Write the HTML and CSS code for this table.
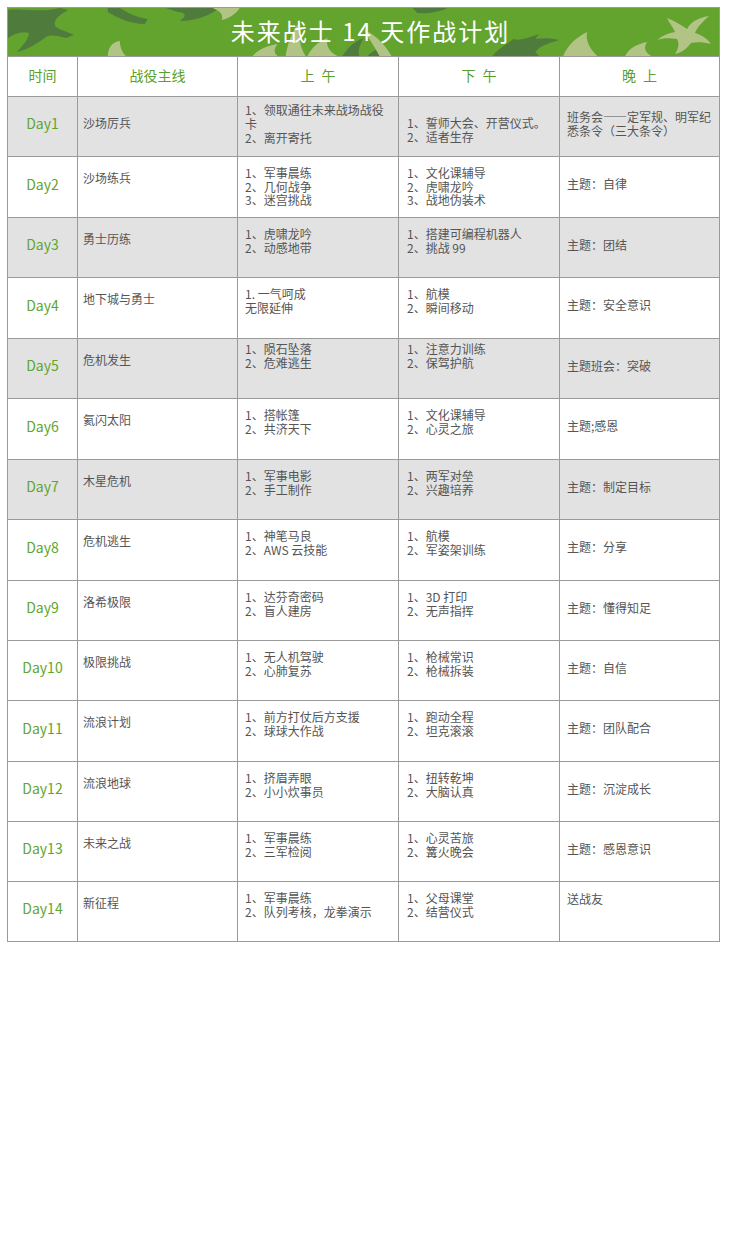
FILE: index.html
```html
<!DOCTYPE html>
<html lang="zh-CN">
<head>
<meta charset="utf-8">
<title>未来战士 14 天作战计划</title>
<link rel="stylesheet" href="styles.css">
</head>
<body>
<div class="sheet">
  <div class="banner">
    <svg class="camo" viewBox="0 0 712 48" preserveAspectRatio="none" aria-hidden="true">
      <!-- dark shapes -->
      <path class="dk" d="M0,2 C14,0 34,5 52,0 L60,2 C50,8 44,13 48,19 C55,23 63,25 66,27 L58,30 C50,28 43,26 38,29 C30,35 21,41 9,44 C15,37 21,31 21,25 C13,23 6,26 0,30 Z"/>
      <path class="dk" d="M100,0 L112,0 C120,5 128,9 140,11 L137,16 C124,16 111,11 100,4 Z"/>
      <path class="dk" d="M158,0 L212,0 C204,6 190,13 172,13 C178,9 180,5 170,4 Z"/>
      <path class="dk" d="M335,48 C340,40 346,34 356,30 C352,38 350,43 352,48 Z"/>
      <path class="dk" d="M405,0 L440,0 C432,4 420,6 410,5 Z"/>
      <path class="dk" d="M485,48 C492,40 500,36 506,31 C512,33 520,30 532,26 L528,31 C536,30 544,30 552,32 C542,35 532,38 528,44 L532,48 Z"/>
      <path class="dk" d="M360,48 C366,42 370,40 376,42 L372,48 Z"/>
      <!-- pale shapes -->
      <path class="pl" d="M100,48 C100,40 104,34 112,33 C112,38 114,44 118,48 Z"/>
      <path class="pl" d="M205,0 L232,0 C228,6 222,10 214,12 C216,6 212,3 205,0 Z"/>
      <path class="pl" d="M245,48 C250,42 258,38 270,36 C266,41 266,45 270,48 Z"/>
      <path class="pl" d="M278,48 C280,36 284,24 292,14 C290,26 292,38 298,48 Z"/>
      <path class="pl" d="M300,48 C304,40 310,34 320,30 C318,38 322,44 330,48 Z"/>
      <path class="pl" d="M357,22 C366,26 376,34 384,48 L372,48 C368,40 362,32 357,22 Z"/>
      <path class="pl" d="M556,48 C560,38 568,30 580,24 C578,32 582,40 590,48 Z"/>
      <path class="pl" d="M618,48 C622,40 630,36 640,34 C636,40 638,44 644,48 Z"/>
      <path class="pl" d="M660,10 C668,13 674,17 680,21 C684,14 690,10 702,8 C694,15 690,20 688,25 C694,27 700,30 704,36 C696,34 690,34 684,35 C680,40 676,44 668,46 C672,40 672,35 670,31 C662,30 656,30 650,32 C656,27 662,25 668,24 C666,19 662,15 660,10 Z"/>
    </svg>
    <h1 class="title">未来战士 14 天作战计划</h1>
  </div>
  <div class="grid">
    <div class="row head">
      <div class="cell th">时间</div>
      <div class="cell th">战役主线</div>
      <div class="cell th">上&ensp;午</div>
      <div class="cell th">下&ensp;午</div>
      <div class="cell th">晚&ensp;上</div>
    </div>

    <div class="row alt">
      <div class="cell day">Day1</div>
      <div class="cell name first">沙场厉兵</div>
      <div class="cell am first">1、领取通往未来战场战役卡<br>2、离开寄托</div>
      <div class="cell pm mid">1、誓师大会、开营仪式。<br>2、适者生存</div>
      <div class="cell eve">班务会——定军规、明军纪悉条令（三大条令）</div>
    </div>

    <div class="row">
      <div class="cell day">Day2</div>
      <div class="cell name">沙场练兵</div>
      <div class="cell am">1、军事晨练<br>2、几何战争<br>3、迷宫挑战</div>
      <div class="cell pm">1、文化课辅导<br>2、虎啸龙吟<br>3、战地伪装术</div>
      <div class="cell eve">主题：自律</div>
    </div>

    <div class="row alt">
      <div class="cell day">Day3</div>
      <div class="cell name">勇士历练</div>
      <div class="cell am">1、虎啸龙吟<br>2、动感地带</div>
      <div class="cell pm">1、搭建可编程机器人<br>2、挑战 99</div>
      <div class="cell eve">主题：团结</div>
    </div>

    <div class="row">
      <div class="cell day">Day4</div>
      <div class="cell name">地下城与勇士</div>
      <div class="cell am">1. 一气呵成<br>无限延伸</div>
      <div class="cell pm">1、航模<br>2、瞬间移动</div>
      <div class="cell eve">主题：安全意识</div>
    </div>

    <div class="row alt">
      <div class="cell day">Day5</div>
      <div class="cell name">危机发生</div>
      <div class="cell am tight">1、陨石坠落<br>2、危难逃生</div>
      <div class="cell pm tight">1、注意力训练<br>2、保驾护航</div>
      <div class="cell eve">主题班会：突破</div>
    </div>

    <div class="row">
      <div class="cell day">Day6</div>
      <div class="cell name">氦闪太阳</div>
      <div class="cell am">1、搭帐篷<br>2、共济天下</div>
      <div class="cell pm">1、文化课辅导<br>2、心灵之旅</div>
      <div class="cell eve">主题;感恩</div>
    </div>

    <div class="row alt">
      <div class="cell day">Day7</div>
      <div class="cell name">木星危机</div>
      <div class="cell am">1、军事电影<br>2、手工制作</div>
      <div class="cell pm">1、两军对垒<br>2、兴趣培养</div>
      <div class="cell eve">主题：制定目标</div>
    </div>

    <div class="row">
      <div class="cell day">Day8</div>
      <div class="cell name">危机逃生</div>
      <div class="cell am">1、神笔马良<br>2、AWS 云技能</div>
      <div class="cell pm">1、航模<br>2、军姿架训练</div>
      <div class="cell eve">主题：分享</div>
    </div>

    <div class="row">
      <div class="cell day">Day9</div>
      <div class="cell name">洛希极限</div>
      <div class="cell am">1、达芬奇密码<br>2、盲人建房</div>
      <div class="cell pm">1、3D 打印<br>2、无声指挥</div>
      <div class="cell eve">主题：懂得知足</div>
    </div>

    <div class="row">
      <div class="cell day">Day10</div>
      <div class="cell name">极限挑战</div>
      <div class="cell am">1、无人机驾驶<br>2、心肺复苏</div>
      <div class="cell pm">1、枪械常识<br>2、枪械拆装</div>
      <div class="cell eve">主题：自信</div>
    </div>

    <div class="row">
      <div class="cell day">Day11</div>
      <div class="cell name">流浪计划</div>
      <div class="cell am">1、前方打仗后方支援<br>2、球球大作战</div>
      <div class="cell pm">1、跑动全程<br>2、坦克滚滚</div>
      <div class="cell eve">主题：团队配合</div>
    </div>

    <div class="row">
      <div class="cell day">Day12</div>
      <div class="cell name">流浪地球</div>
      <div class="cell am">1、挤眉弄眼<br>2、小小炊事员</div>
      <div class="cell pm">1、扭转乾坤<br>2、大脑认真</div>
      <div class="cell eve">主题：沉淀成长</div>
    </div>

    <div class="row">
      <div class="cell day">Day13</div>
      <div class="cell name">未来之战</div>
      <div class="cell am">1、军事晨练<br>2、三军检阅</div>
      <div class="cell pm">1、心灵苦旅<br>2、篝火晚会</div>
      <div class="cell eve">主题：感恩意识</div>
    </div>

    <div class="row">
      <div class="cell day">Day14</div>
      <div class="cell name">新征程</div>
      <div class="cell am">1、军事晨练<br>2、队列考核，龙拳演示</div>
      <div class="cell pm">1、父母课堂<br>2、结营仪式</div>
      <div class="cell eve top">送战友</div>
    </div>
  </div>
</div>
</body>
</html>
```

FILE: styles.css
```css
html, body {
  margin: 0;
  padding: 0;
  background: #ffffff;
}

body {
  font-family: "Noto Sans CJK SC", "Noto Sans", "Liberation Sans", sans-serif;
  color: #555555;
}

.sheet {
  width: 713px;
  margin: 7px 0 0 7px;
  box-sizing: border-box;
  border-top: 1px solid #9a9a9a;
  border-left: 1px solid #9a9a9a;
}

.banner {
  position: relative;
  height: 48px;
  background: #63a42f;
  border-right: 1px solid #9a9a9a;
  overflow: hidden;
  display: flex;
  align-items: center;
  justify-content: center;
}

.camo {
  position: absolute;
  left: 0;
  top: 0;
  width: 100%;
  height: 100%;
}

.camo .dk {
  fill: #4f7b3d;
}

.camo .pl {
  fill: #b2c485;
}

.title {
  position: relative;
  margin: 0 0 2px 14px;
  font-size: 24px;
  font-weight: normal;
  letter-spacing: 2px;
  color: #ffffff;
  line-height: 30px;
}

.grid {
  display: grid;
  grid-template-columns: 70px 160px 161px 161px 160px;
  grid-template-rows: 41px 60px 61px 60px 61px 60px 61px 60px 61px 60px 60px 61px 60px 60px 60px;
}

.row {
  display: contents;
}

.cell {
  box-sizing: border-box;
  border-right: 1px solid #9a9a9a;
  border-bottom: 1px solid #9a9a9a;
  font-size: 12px;
  line-height: 13.5px;
  color: #555555;
  background: #ffffff;
}

.row.alt .cell {
  background: #e2e2e2;
}

.th {
  display: flex;
  align-items: center;
  justify-content: center;
  font-size: 14px;
  color: #5a9f2a;
  border-top: 1px solid #9a9a9a;
  padding-bottom: 1px;
}

.day {
  display: flex;
  align-items: center;
  justify-content: center;
  font-size: 14px;
  color: #5ea52c;
  padding-bottom: 5px;
}

.name {
  padding: 14px 4px 0 5px;
  line-height: 14px;
}

.name.first {
  padding-top: 19px;
}

.am {
  padding: 9px 7px 0 7px;
}

.am.first {
  padding-top: 6px;
  line-height: 14px;
}

.am.tight,
.pm.tight {
  padding-top: 3px;
}

.pm {
  padding: 9px 6px 0 8px;
}

.pm.mid {
  display: flex;
  align-items: center;
  padding-top: 6px;
}

.eve {
  display: flex;
  align-items: center;
  padding: 0 6px 6px 7px;
}

.eve.top {
  align-items: flex-start;
  padding-top: 10px;
}
```
